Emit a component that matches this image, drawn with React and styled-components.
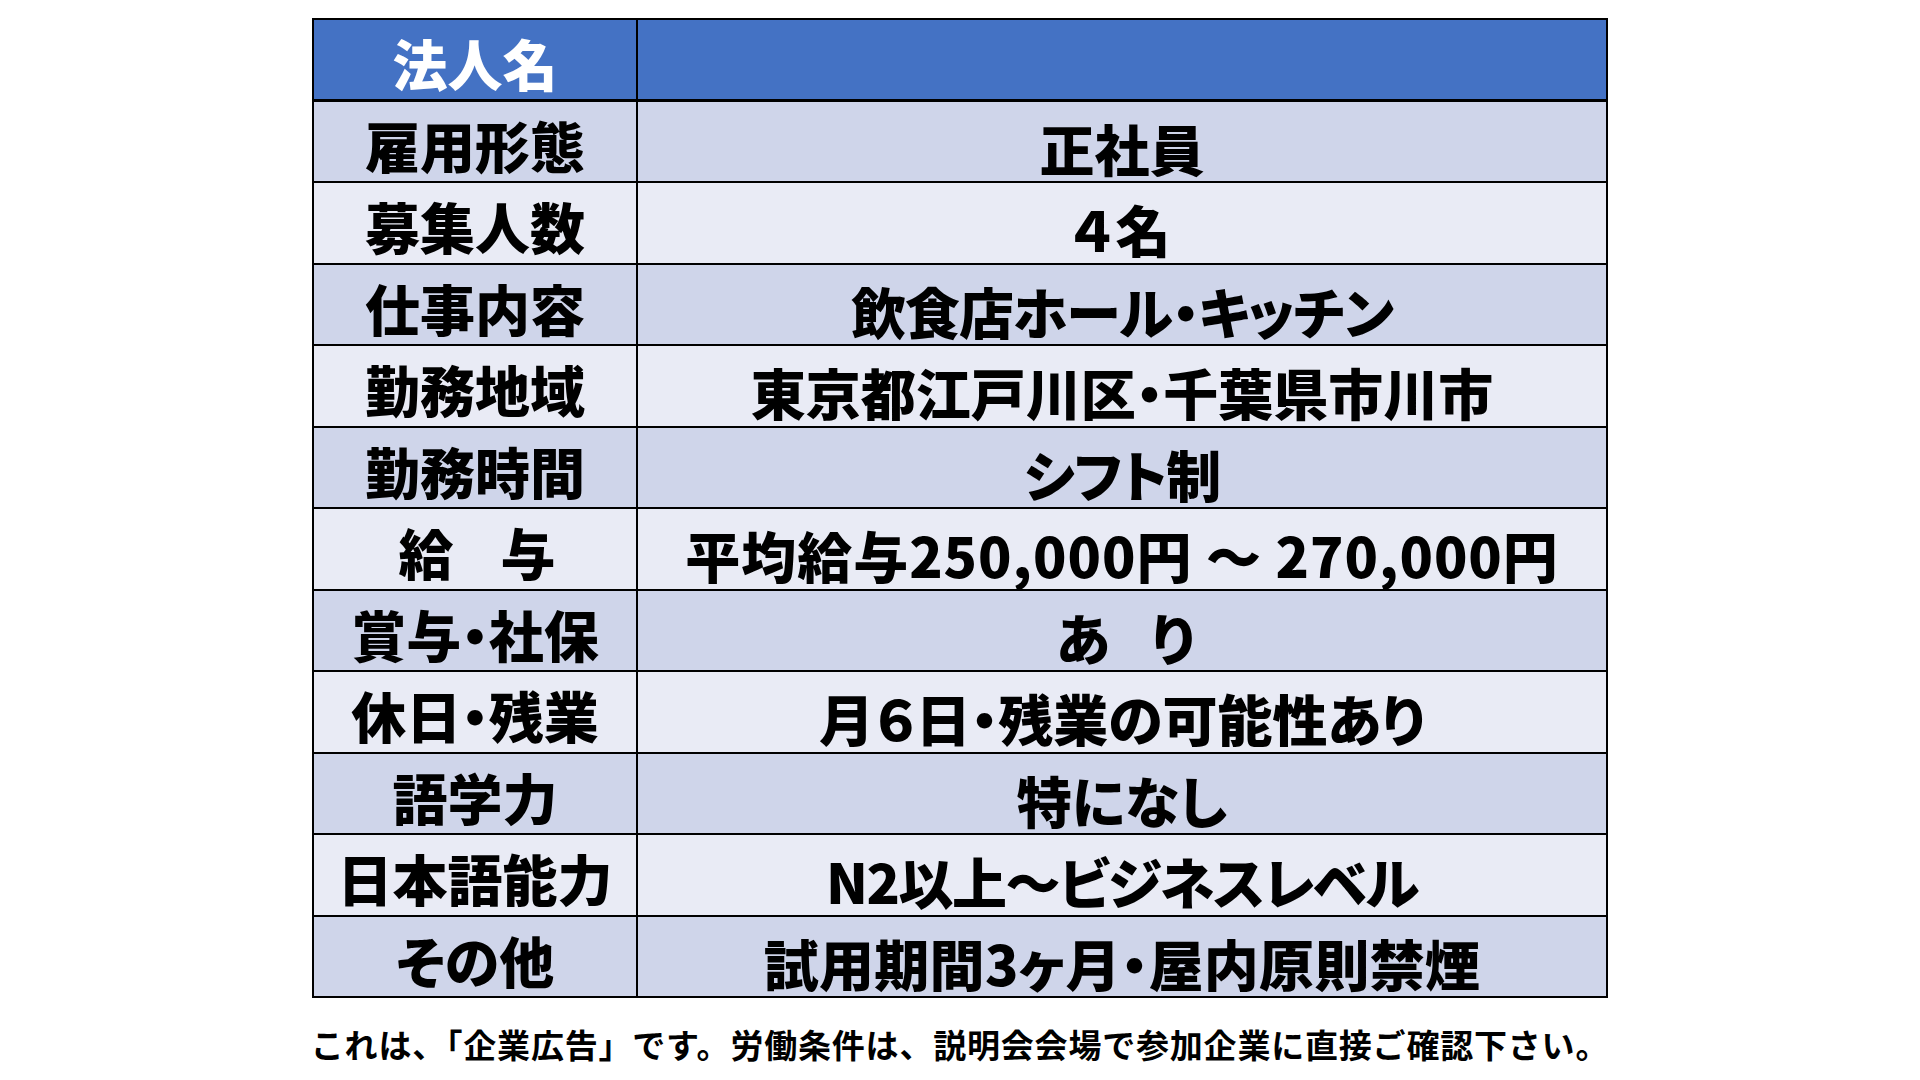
import React from "react";
import styled, { createGlobalStyle } from "styled-components";

const GlobalStyle = createGlobalStyle`
  html, body {
    margin: 0;
    padding: 0;
    background: #ffffff;
  }
  body {
    font-family: "Noto Sans CJK JP", "Noto Sans", sans-serif;
  }
`;

const Page = styled.div`
  width: 1920px;
  height: 1080px;
  display: flex;
  flex-direction: column;
  align-items: center;
  padding-top: 18px;
  box-sizing: border-box;
`;

const Table = styled.div`
  width: 1296px;
  display: grid;
  grid-template-columns: 324px 1fr;
  grid-auto-rows: 81.5px;
  border-top: 2px solid #000;
  border-left: 2px solid #000;
  border-right: 2px solid #000;
  box-sizing: border-box;
`;

const bg = {
  head: "#4472C4",
  dark: "#CFD5EA",
  light: "#E9EBF5",
};

const Cell = styled.div`
  box-sizing: border-box;
  display: flex;
  align-items: center;
  justify-content: center;
  background: ${(p) => bg[p.$tone]};
  border-bottom: ${(p) => (p.$tone === "head" ? 3 : 2)}px solid #000;
  font-family: "Noto Sans CJK JP", "Noto Sans", sans-serif;
  font-weight: 900;
  line-height: 1;
  white-space: pre;
  font-feature-settings: "palt";
  letter-spacing: ${(p) => p.$ls || 0}px;
`;

const LabelCell = styled(Cell)`
  border-right: 2px solid #000;
  font-size: 55px;
  color: ${(p) => (p.$tone === "head" ? "#ffffff" : "#000000")};
  padding-top: ${(p) => (p.$tone === "head" ? 6 : 6)}px;
`;

const ValueCell = styled(Cell)`
  font-size: 55px;
  color: #000;
  padding-top: 12px;
`;

const Note = styled.div`
  margin-top: 30px;
  font-family: "Noto Sans CJK JP", "Noto Sans", sans-serif;
  font-weight: 700;
  font-size: 33px;
  line-height: 1;
  letter-spacing: 0.8px;
  color: #000;
  white-space: nowrap;
`;

const rows = [
  { label: "雇用形態", value: "正社員" },
  { label: "募集人数", value: "４名", vls: 2 },
  { label: "仕事内容", value: "飲食店ホール・キッチン", vls: -1 },
  { label: "勤務地域", value: "東京都江戸川区・千葉県市川市" },
  { label: "勤務時間", value: "シフト制", vls: -1 },
  { label: "給　与", value: "平均給与250,000円 ～ 270,000円", lls: -4, vls: 1 },
  { label: "賞与・社保", value: "あ　り", vls: -7 },
  { label: "休日・残業", value: "月６日・残業の可能性あり" },
  { label: "語学力", value: "特になし" },
  { label: "日本語能力", value: "N2以上～ビジネスレベル", vls: -1.5 },
  { label: "その他", value: "試用期間3ヶ月・屋内原則禁煙", vls: 0.3 },
];

export default function App() {
  return (
    <>
      <GlobalStyle />
      <Page>
        <Table>
          <LabelCell $tone="head">法人名</LabelCell>
          <ValueCell $tone="head" />
          {rows.map((r, i) => {
            const tone = i % 2 === 0 ? "dark" : "light";
            return (
              <React.Fragment key={r.label}>
                <LabelCell $tone={tone} $ls={r.lls}>
                  {r.label}
                </LabelCell>
                <ValueCell $tone={tone} $ls={r.vls}>
                  {r.value}
                </ValueCell>
              </React.Fragment>
            );
          })}
        </Table>
        <Note>
          これは、「企業広告」です。労働条件は、説明会会場で参加企業に直接ご確認下さい。
        </Note>
      </Page>
    </>
  );
}
